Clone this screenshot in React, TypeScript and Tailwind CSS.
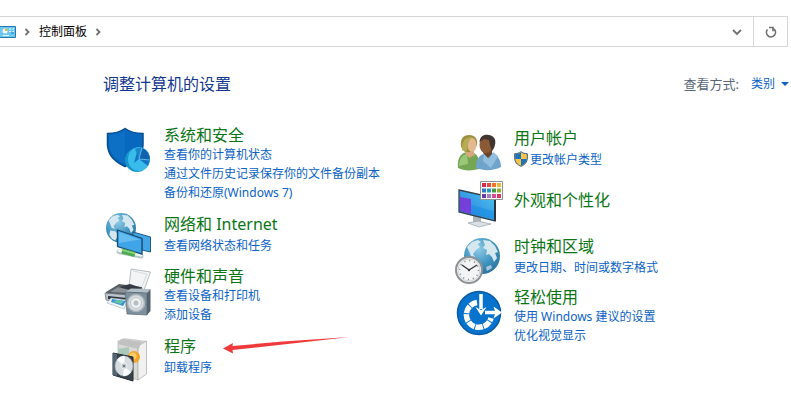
import type { ReactNode } from "react";

function Icon({ children }: { children: ReactNode }) {
  return (
    <svg
      viewBox="0 0 46 46"
      aria-hidden="true"
      className="h-[46px] w-[46px] shrink-0 self-start overflow-visible"
    >
      {children}
    </svg>
  );
}

function Globe({ id, cx, cy, r }: { id: string; cx: number; cy: number; r: number }) {
  return (
    <g>
      <defs>
        <radialGradient id={id} cx="0.4" cy="0.3" r="0.75">
          <stop offset="0" stopColor="#8fcbe6" />
          <stop offset="0.6" stopColor="#3f93bf" />
          <stop offset="1" stopColor="#2a709c" />
        </radialGradient>
      </defs>
      <circle cx={cx} cy={cy} r={r} fill={`url(#${id})`} />
      <g transform={`translate(${cx} ${cy}) scale(${r / 18})`} fill="#d5e8f0">
        <path d="M-15-9-10-14-4-16-1-14-4-12-2-9-6-6-9-2-7 1-11 0-13-5Z" />
        <path d="M1-16 8-15 13-10 16-4 13-3 15 2 12 6 10 1 7-2 4-1 5-6 1-8 3-11Z" />
        <path d="M-13 3-7 4-3 8-5 12-7 15-11 13-14 8Z" />
        <path d="M4 11 9 9 10 12 5 15Z" opacity="0.7" />
      </g>
    </g>
  );
}

const SystemIcon = () => (
  <Icon>
    <path d="M20 3.5C15 7 9 8.5 2.5 8.5V20C3 31 10 37 20 41.5 31 37 37.500 31 38 20V8.500C31 8.500 25 7 20 3.500Z" fill="#0868bd" stroke="#064d91" strokeWidth="1.5" />
    <path d="M20 6C15 9 10 10 4 10V20C5 29 11 35 20 39Z" fill="#1277cc" opacity="0.5" />
    <ellipse cx="32" cy="35" rx="12" ry="12" fill="#1694cc" />
    <ellipse cx="34" cy="34" rx="11" ry="12" fill="#39bce9" />
    <path d="M34 34 30 24A11 12 0 0 1 37 22.500Z" fill="#1c86cf" />
    <path d="M34 34 37 23A11 12 0 0 1 45 35Z" fill="#1263ad" />
    <path d="M34 34 29 38 32 27ZM34 34 45 35 43 41Z" fill="#1575c4" />
    <path d="M34 34 37 23M34 34 45 35" stroke="#7edbfa" strokeWidth="0.6" />
  </Icon>
);

const NetworkIcon = () => (
  <Icon>
    <Globe id="net-globe" cx={16} cy={17} r={15} />
    <path d="M28 21 45.500 26V41L37 39V28L28 25Z" fill="#42a5e6" stroke="#205b82" />
    <path d="M14 40.500 36 45" stroke="#b9c6c9" strokeWidth="5" strokeLinecap="round" />
    <path d="M14 39.500 36 44" stroke="#f0f4f4" strokeWidth="3" strokeLinecap="round" />
    <path d="M12.500 19 37 27.500V43L12.500 35.500Z" fill="#3fa5e8" stroke="#174c73" strokeWidth="1.300" />
    <path d="M14 21 35 28.500 14 32Z" fill="#7ac8f5" opacity="0.65" />
    <path d="M17 40 30 43.500" stroke="#4cab52" strokeWidth="5" />
    <path d="M17 39 30 42.500" stroke="#8ada77" strokeWidth="1.500" />
  </Icon>
);

const HardwareIcon = () => (
  <Icon>
    <path d="M26 3 45.500 6 38 27 24 20Z" fill="#f2f4f5" stroke="#a9afb3" strokeWidth="0.800" />
    <path d="M28 5 42 8 37 20" fill="none" stroke="#d8dde0" />
    <path d="M1 26 14 18 37 21 38 28 25 31 1 28Z" fill="#596068" />
    <path d="M5 26 15 20 33 22 25 27Z" fill="#8c9298" />
    <path d="M13 21 25 18 37 22 28 25Z" fill="#343b43" />
    <path d="M0 27 24 29V39L1 34Z" fill="#bdc3c9" stroke="#666e76" strokeWidth="0.700" />
    <path d="M3 30 22 32V37L3 33Z" fill="#28333d" />
    <path d="M6 32 23 34 19 43 2 37Z" fill="#f3f7fb" stroke="#9baab6" strokeWidth="0.600" />
    <path d="M7 33 21 35 18 40 6 36Z" fill="#3794d6" />
    <path d="M8 36 16 38 19 35 12 34Z" fill="#66c4ab" />
    <path d="M20 26 26 22.500 45.500 23 42 27Z" fill="#b4c0c8" />
    <path d="M20 26 42 27V49L22 48Z" fill="#7e909c" stroke="#586874" strokeWidth="0.700" />
    <path d="M42 27 45.500 23V45L42 49Z" fill="#526370" />
    <circle cx="31" cy="37" r="8.500" fill="#d6dcdf" stroke="#aab4ba" strokeWidth="1.500" />
    <circle cx="31" cy="37" r="5.500" fill="#eef1f2" stroke="#bbc4c9" />
    <circle cx="31" cy="37" r="2.500" fill="#b3bdc3" />
  </Icon>
);

const ProgramsIcon = () => (
  <Icon>
    <g transform="translate(0 -2)">
      <path d="M13 10 19 7 42 10 37 15Z" fill="#cfcfcd" />
      <path d="M13 10 33 15V49L13 43Z" fill="#d9dad7" stroke="#b0b1ae" strokeWidth="0.700" />
      <path d="M33 15 41.500 10V43L33 49Z" fill="#f1f1ef" stroke="#b0b0ae" strokeWidth="0.800" />
      <path d="M16 8 36 11 34 18 13 13Z" fill="#bfc2c1" />
      <path d="M13 18 24 16V29L13 26Z" fill="#aac9ba" />
      <circle cx="29" cy="26" r="6" fill="#f2a52c" />
      <circle cx="28" cy="25" r="3.500" fill="#ffce69" />
      <path d="M8 22 28 26V50L8 44Z" fill="#39434b" stroke="#232a30" />
      <path d="M8 22 12 23V45L8 44Z" fill="#526574" />
      <ellipse cx="19" cy="35" rx="9" ry="10" fill="#d6dce0" stroke="#a5afb5" strokeWidth="0.700" />
      <path d="M19 35 12 29A9 10 0 0 1 20 25ZM19 35 26 41A9 10 0 0 1 18 45Z" fill="#f8fafb" />
      <circle cx="19" cy="35" r="3" fill="#bcc5ca" stroke="#edf0f2" />
      <circle cx="19" cy="35" r="1" fill="#58656e" />
    </g>
  </Icon>
);

const UsersIcon = () => (
  <Icon>
    <path d="M3 43C2 34 5 29 11 27L19 28C24 31 25 37 24 44 16 46 9 46 3 43Z" fill="#74a653" />
    <path d="M4 41C4 34 7 30 12 29L13 39Z" fill="#9bc779" />
    <path d="M12 25H18L20 30 14 33 10 28Z" fill="#d8a77d" />
    <path d="M6 22C5 14 8 10 14 10 20 10 23 14 22 20L18 27 10 27Z" fill="#9c9040" />
    <ellipse cx="17" cy="20" rx="4.500" ry="7" fill="#e4b991" />
    <path d="M7 25C7 15 10 12 18 12 12 15 14 22 11 27Z" fill="#b8ab55" />
    <path d="M21 43C21 35 24 30 29 29L38 28C44 31 46 37 46 42 38 46 29 46 21 43Z" fill="#6fa5cb" />
    <path d="M29 28 34 34 38 27 43 31 36 43 28 36Z" fill="#93bfde" />
    <path d="M29 24H37V29L33 33 28 28Z" fill="#6b4429" />
    <ellipse cx="31" cy="20" rx="6.500" ry="8.500" fill="#8a5936" />
    <path d="M24.500 17C25 11 29 9 34 10 40 11 42 16 39 23L37 26 35 20 34 15 29 14Z" fill="#40352f" />
  </Icon>
);

const colors = [
  "#db294f", "#e94b3f", "#ef7430", "#f2b32f",
  "#2d77c8", "#2499b5", "#459b49", "#91ad2e",
  "#653ea2", "#a77cc5", "#d04d9a", "#dc365e",
];

const AppearanceIcon = () => (
  <Icon>
    <defs>
      <linearGradient id="monitor-screen" x1="0" y1="1" x2="1" y2="0">
        <stop offset="0" stopColor="#2474dc" />
        <stop offset="1" stopColor="#4fc8ef" />
      </linearGradient>
    </defs>
    <g transform="translate(0 1)">
      <path d="M18 34 26 36V42L18 42Z" fill="#adb5bb" />
      <path d="M13 43 23 41 36 44 24 47Z" fill="#d9dfe3" stroke="#9ba4aa" strokeWidth="0.700" />
      <path d="M4 10 40 18V41L4 32Z" fill="url(#monitor-screen)" stroke="#34434c" strokeWidth="1.300" />
      <path d="M5 17 16 19V34L5 31Z" fill="#7440d9" />
      <path d="M16 25 39 31V39L16 34Z" fill="#168ce1" opacity="0.550" />
      <path d="M40 18V41" stroke="#27343c" strokeWidth="2" />
      <path d="M25.500 1.500H47.500V19.500H25.500Z" fill="#fff" stroke="#929292" />
      {colors.map((color, index) => (
        <rect
          key={color}
          x={27 + (index % 4) * 5}
          y={3 + Math.floor(index / 4) * 5.5}
          width="4"
          height="4"
          fill={color}
        />
      ))}
    </g>
  </Icon>
);

const ClockIcon = () => (
  <Icon>
    <g transform="translate(0 1)">
      <Globe id="clock-globe" cx={27} cy={22} r={18} />
      <circle cx="14" cy="36" r="13" fill="#f3f4f4" stroke="#8c9295" strokeWidth="2" />
      <circle cx="14" cy="36" r="11" fill="none" stroke="#d1d5d7" />
      <circle cx="14" cy="36" r="9.500" fill="none" stroke="#798287" strokeWidth="1.500" strokeDasharray="1 3.974" />
      <path d="M7 31 14 36 22 31" fill="none" stroke="#33393d" strokeWidth="1.400" />
      <circle cx="14" cy="36" r="1.200" fill="#33393d" />
    </g>
  </Icon>
);

const AccessIcon = () => (
  <Icon>
    <circle cx="24" cy="26" r="21.500" fill="#0873cc" stroke="#075aa5" strokeWidth="1.500" />
    <path d="M22 15.500A12.500 12.500 0 1 0 36 31" fill="none" stroke="#fff" strokeWidth="5.500" strokeDasharray="7.500 0.900" />
    <path d="M26 7V25" stroke="#0873cc" strokeWidth="6" />
    <path d="M26 7V22" stroke="#fff" strokeWidth="3.500" />
    <path d="M20.500 20 26 23 31.500 20 26 28.500Z" fill="#fff" />
    <path d="M30 25.500H41" stroke="#fff" strokeWidth="3.500" />
    <path d="M38.500 19.500 47 25.500 38.500 31.500 40.500 25.500Z" fill="#fff" />
  </Icon>
);

const ShieldBadge = () => (
  <svg viewBox="0 0 14 16" aria-hidden="true" className="h-4 w-3.5 shrink-0">
    <path d="M7 .7C5 2.200 3 2.700.7 2.700V7C.7 11 3 13.700 7 15.300 11 13.700 13.300 11 13.300 7V2.700C11 2.700 9 2.200 7 .7Z" fill="#f6c445" stroke="#315783" />
    <path d="M7 1.300V8H1.200V3.200C3.500 3.200 5 2.700 7 1.300ZM7 8H12.800C12.600 11 10.500 13.300 7 14.800Z" fill="#1c73bd" />
  </svg>
);

const Arrow = () => (
  <svg
    viewBox="0 0 128 18"
    aria-hidden="true"
    className="pointer-events-none absolute top-0 left-[59px] h-[18px] w-32"
  >
    <path d="M0 12.500 10 7 9.500 10 60 5.500 127 1 60 8.500 9.500 14 10 17.500Z" fill="#ef3a3b" />
  </svg>
);

type Category = {
  title: string;
  links: string[];
  icon: ReactNode;
  shielded?: boolean;
  marked?: boolean;
};

const leftCategories: Category[] = [
  { title: "系统和安全", links: ["查看你的计算机状态", "通过文件历史记录保存你的文件备份副本", "备份和还原(Windows 7)"], icon: <SystemIcon /> },
  { title: "网络和 Internet", links: ["查看网络状态和任务"], icon: <NetworkIcon /> },
  { title: "硬件和声音", links: ["查看设备和打印机", "添加设备"], icon: <HardwareIcon /> },
  { title: "程序", links: ["卸载程序"], icon: <ProgramsIcon />, marked: true },
];

const rightCategories: Category[] = [
  { title: "用户帐户", links: ["更改帐户类型"], icon: <UsersIcon />, shielded: true },
  { title: "外观和个性化", links: [], icon: <AppearanceIcon /> },
  { title: "时钟和区域", links: ["更改日期、时间或数字格式"], icon: <ClockIcon /> },
  { title: "轻松使用", links: ["使用 Windows 建议的设置", "优化视觉显示"], icon: <AccessIcon /> },
];

function CategoryItem({ title, links, icon, shielded, marked }: Category) {
  return (
    <section className="flex items-center gap-[13px]">
      {icon}
      <div
        className={`relative flex flex-col items-start ${links.length === 1 ? "gap-0.5" : ""} ${links.length === 0 ? "pb-1" : ""}`}
      >
        <h2 className="text-base leading-5 whitespace-nowrap text-[#0b7516]">
          <a href="#" className="hover:underline">{title}</a>
        </h2>
        {links.map((link) => (
          <a
            key={link}
            href="#"
            className="flex items-center gap-0.5 text-xs leading-[19px] whitespace-nowrap text-[#0b62c4] hover:underline"
          >
            {shielded && <ShieldBadge />}
            {link}
          </a>
        ))}
        {marked && <Arrow />}
      </div>
    </section>
  );
}

function Chevron({ down = false }: { down?: boolean }) {
  return (
    <svg viewBox="0 0 10 10" aria-hidden="true" className="h-2.5 w-2.5" fill="none" stroke="#707070" strokeWidth="1.8">
      <path d={down ? "M1 3 5 7 9 3" : "M3.500 2 6.500 5 3.500 8"} />
    </svg>
  );
}

export default function App() {
  return (
    <main className="min-h-screen overflow-hidden bg-white font-['Noto_Sans','Noto_Sans_CJK_SC',sans-serif] text-xs">
      <nav aria-label="地址栏" className="mt-4 mr-[3px] flex h-[31px] items-stretch border border-l-0 border-[#d6d6d6]">
        <div className="flex flex-1 items-center">
          <svg viewBox="0 0 16 12" aria-hidden="true" className="h-3 w-4">
            <path d="M0 .5H15.500V11.500H0" fill="#6dc8f2" stroke="#2478ae" />
            <circle cx="5" cy="5" r="2.500" fill="#f6fbff" />
            <path d="M5 5V2.500A2.500 2.500 0 0 1 7.500 5Z" fill="#e2b72d" />
            <path d="M9 3H11M12.500 3H14M9 5.500H11M12.500 5.500H14M3 9.500H9" stroke="#e9faff" />
            <path d="M11 7H14" stroke="#2783c0" />
          </svg>
          <span className="ml-1.5"><Chevron /></span>
          <a href="#" className="ml-[7px] leading-5 text-black">控制面板</a>
          <span className="ml-1.5"><Chevron /></span>
        </div>
        <button type="button" aria-label="历史记录" className="flex w-8 items-center justify-center">
          <Chevron down />
        </button>
        <button type="button" aria-label="刷新" className="flex w-[34px] items-center justify-center border-l border-[#d6d6d6]">
          <svg viewBox="0 0 12 12" aria-hidden="true" className="h-3 w-3" fill="none" stroke="#707070" strokeWidth="1.7">
            <path d="M2.500 3.500A4.500 4.500 0 1 0 9 3" />
            <path d="M4.500 1.200V5.200M3.700 1.500H8.500" transform="matrix(-1 0 0 1 12.500 0)" />
          </svg>
        </button>
      </nav>

      <header className="mt-[27px] mr-0.5 ml-[103px] flex items-center justify-between">
        <h1 className="text-base leading-5 text-[#12378f]">调整计算机的设置</h1>
        <div className="flex items-center leading-5">
          <span className="text-[13px] text-[#5b6779]">查看方式:</span>
          <button type="button" aria-label="查看方式: 类别" className="ml-3 flex items-center gap-1.5 text-[#0b62c4]">
            类别
            <svg viewBox="0 0 8 4" aria-hidden="true" className="h-1 w-2"><path d="M0 0H8L4 4Z" fill="#0b62c4" /></svg>
          </button>
        </div>
      </header>

      <div className="mt-[31px] grid grid-cols-[350px_1fr] items-start pl-[105px]">
        <div className="flex flex-col gap-[9px]">
          {leftCategories.map((category) => <CategoryItem key={category.title} {...category} />)}
        </div>
        <div className="flex flex-col gap-2">
          {rightCategories.map((category) => <CategoryItem key={category.title} {...category} />)}
        </div>
      </div>
    </main>
  );
}
